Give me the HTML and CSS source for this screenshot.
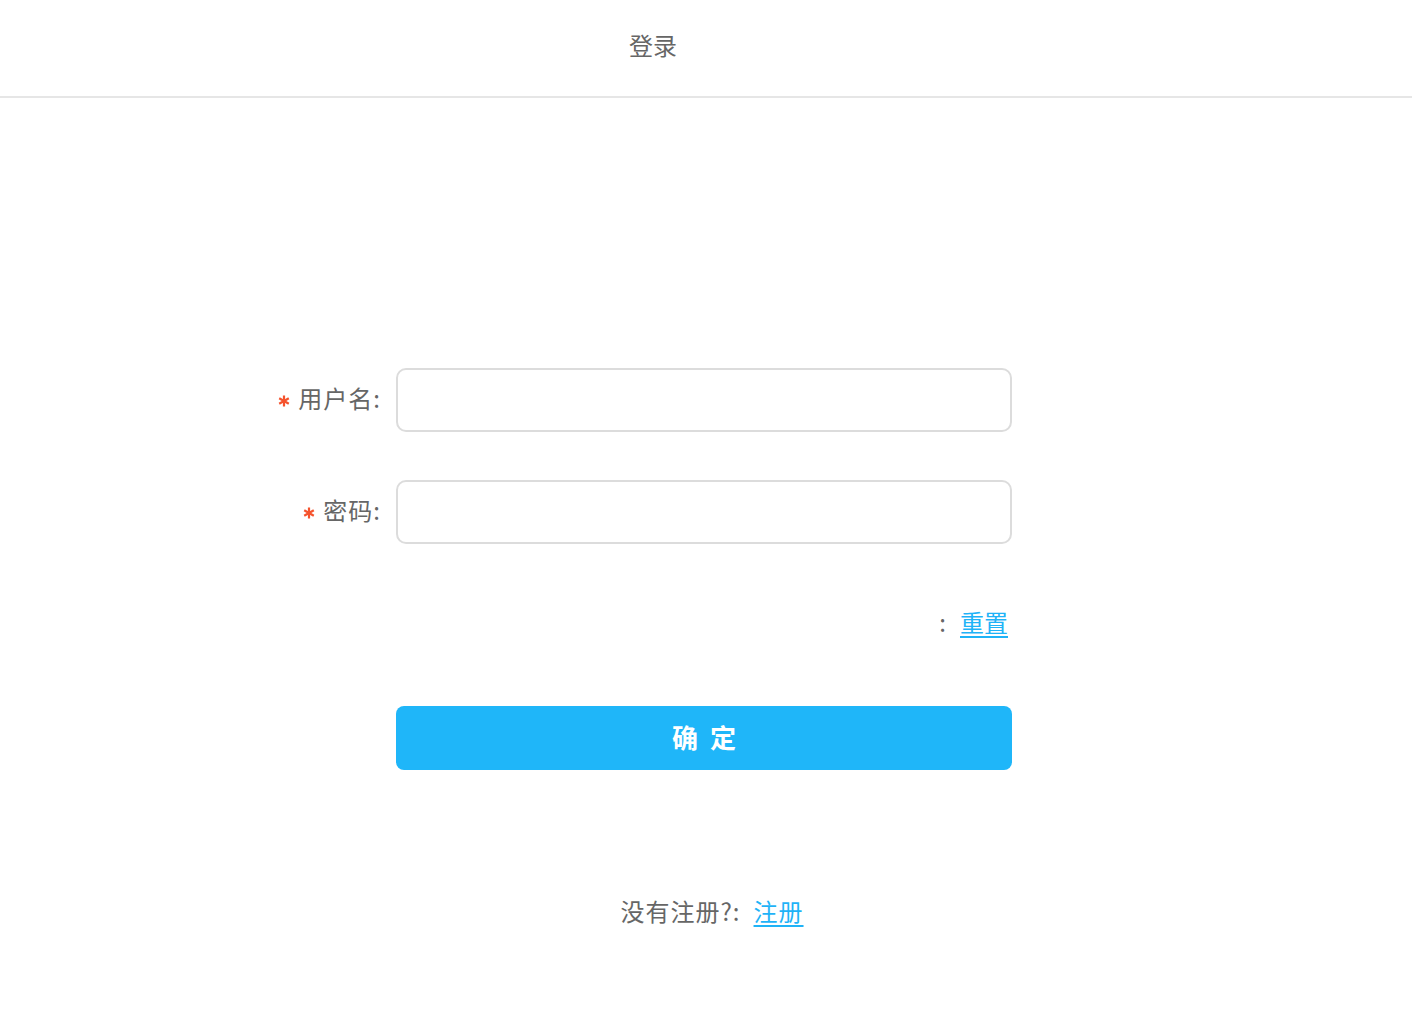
FILE: index.html
```html
<!DOCTYPE html>
<html lang="zh-CN">
<head>
<meta charset="utf-8">
<title>登录</title>
<link rel="stylesheet" href="styles.css">
</head>
<body>
<header class="header">
  <h1 class="title">登录</h1>
</header>
<main class="main">
  <form class="form">
    <label class="label" for="username"><svg class="req" viewBox="0 0 12 12" aria-hidden="true"><path d="M6 0.5V11.5M1.2 3.25L10.8 8.75M10.8 3.25L1.2 8.75"/></svg>用户名:</label>
    <input class="input" id="username" type="text">
    <label class="label" for="password"><svg class="req" viewBox="0 0 12 12" aria-hidden="true"><path d="M6 0.5V11.5M1.2 3.25L10.8 8.75M10.8 3.25L1.2 8.75"/></svg>密码:</label>
    <input class="input" id="password" type="password">
    <div class="spacer"></div>
    <div class="reset-row"><span class="colon">:</span><a class="link" href="#">重置</a></div>
    <div class="spacer"></div>
    <button class="submit" type="button">确 定</button>
  </form>
  <p class="register">没有注册?:<a class="link" href="#">注册</a></p>
</main>
</body>
</html>
```
FILE: styles.css
```css
html, body {
  margin: 0;
  padding: 0;
  background: #fff;
  font-family: "Noto Sans CJK SC", "Noto Sans", "Liberation Sans", sans-serif;
  color: #666;
}

.header {
  height: 98px;
  border-bottom: 2px solid #e6e6e6;
  display: flex;
  align-items: center;
  justify-content: center;
  padding-right: 106px;
  box-sizing: border-box;
}

.title {
  margin: 0;
  font-size: 24px;
  font-weight: normal;
  color: #666;
  line-height: 1;
  transform: translateY(-3px);
}

.main {
  padding-top: 270px;
}

.form {
  width: 880px;
  margin: 0 auto;
  display: grid;
  grid-template-columns: 130px 616px;
  row-gap: 48px;
  align-items: center;
}

.label {
  font-size: 24px;
  line-height: 1;
  text-align: right;
  padding-right: 15px;
  padding-bottom: 4px;
  color: #666;
  letter-spacing: 1px;
  display: flex;
  align-items: center;
  justify-content: flex-end;
}

.req {
  width: 12px;
  height: 12px;
  margin-right: 8px;
  margin-top: 5px;
  fill: none;
  stroke: #f5532d;
  stroke-width: 2.2;
  flex: none;
}

.input {
  height: 64px;
  box-sizing: border-box;
  border: 2px solid #dcdcdc;
  border-radius: 10px;
  font-size: 22px;
  padding: 0 16px;
  outline: none;
  width: 616px;
  margin: 0;
}

.reset-row {
  height: 64px;
  display: flex;
  align-items: center;
  justify-content: flex-end;
  padding-right: 4px;
  padding-bottom: 6px;
  box-sizing: border-box;
  font-size: 24px;
}

.colon {
  margin-right: 14px;
}

.link {
  color: #1fb3f7;
  text-decoration: underline;
  text-underline-offset: 4px;
}

.submit {
  grid-column: 2;
  margin-top: 2px;
  height: 64px;
  border: none;
  border-radius: 8px;
  background: #1fb6f9;
  color: #fff;
  font-family: inherit;
  font-size: 26px;
  font-weight: bold;
  letter-spacing: 3px;
  padding: 0 0 4px 3px;
  cursor: pointer;
}

.register {
  margin: 124px 0 0;
  text-align: center;
  font-size: 24px;
  line-height: 34px;
  padding-left: 12px;
  letter-spacing: 1px;
}

.register .link {
  margin-left: 13px;
}
```
